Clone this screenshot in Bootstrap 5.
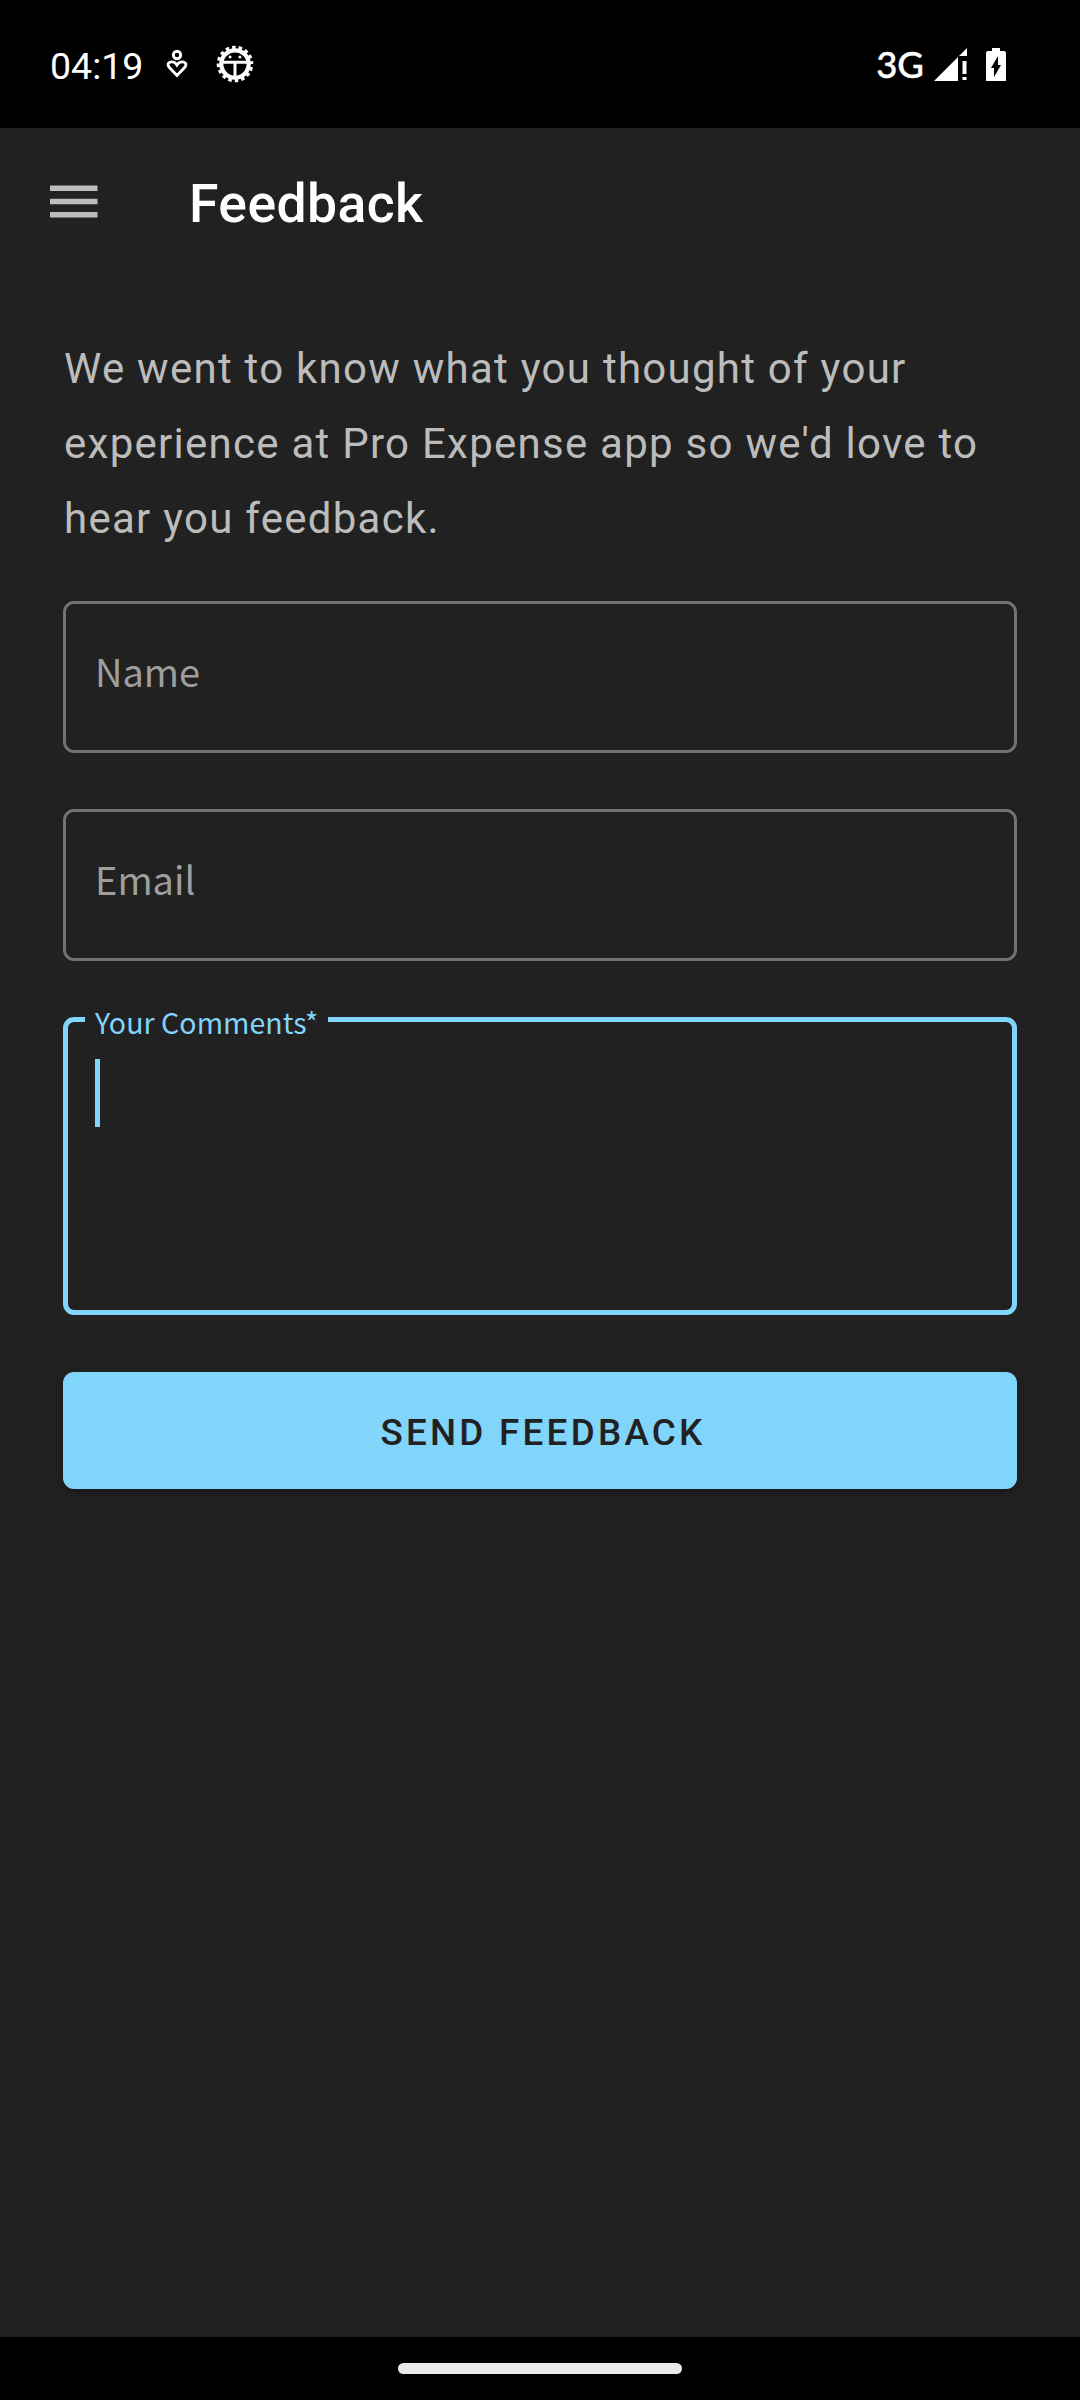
<!DOCTYPE html>
<html lang="en">
<head>
<meta charset="utf-8">
<meta name="viewport" content="width=device-width, initial-scale=1">
<title>Feedback</title>
<link href="https://cdn.jsdelivr.net/npm/bootstrap@5.3.0/dist/css/bootstrap.min.css" rel="stylesheet">
<style>
  html, body { height: 100%; }
  body { background: #212121; font-family: Roboto, sans-serif; overflow: hidden; }
  .status-bar { height: 128px; background: #000; color: #fff; padding: 0 74px 0 50px; }
  .clock { font-size: 37.5px; line-height: 44px; width: 92px; padding-top: 3px; white-space: nowrap; }
  .network { font-family: Lato, sans-serif; font-size: 36.5px; line-height: 44px; font-weight: 500; white-space: nowrap; padding-bottom: 1px; -webkit-text-stroke: .4px #fff; }
  .status-bar svg, .top-bar svg { display: block; flex: none; }
  .top-bar { height: 147px; padding-left: 50px; }
  .page-title { font-size: 53.5px; line-height: 62px; font-weight: 500; color: #fff; letter-spacing: .4px; margin-left: 91px; padding-top: 4px; }
  .content-area { padding: 56px 63px 0; }
  .intro { font-size: 42px; line-height: 75px; letter-spacing: 1.26px; color: #bcbcbc; margin-bottom: 45px; padding-left: 1px; white-space: nowrap; }
  .field { font-family: "Noto Sans CJK JP", "Noto Sans", sans-serif; border-radius: 11px; background: transparent; }
  .field-line, .field-line:focus { height: 152px; border: 3px solid #727272; padding: 0 29px 14px; font-size: 38px; letter-spacing: 0; color: #fff; background: transparent; margin-bottom: 56px; box-shadow: none; }
  .field-line::placeholder { color: #9e9e9e; opacity: 1; }
  .field-comments { height: 298px; border: 5px solid #81d4fa; padding: 37px 27px; margin-bottom: 57px; }
  .float-tag { left: 17px; top: -21px; width: 243px; padding-left: 10px; background: #212121; color: #81d4fa; font-size: 28.5px; line-height: 42px; letter-spacing: .05px; white-space: nowrap; }
  .caret { width: 5px; height: 68px; background: #81d4fa; }
  .btn-send, .btn-send:hover { height: 117px; border: 0; border-radius: 11px; background: #81d4fa; color: #212121; font-size: 36.75px; line-height: 44px; font-weight: 500; letter-spacing: 3.28px; padding: 4px 0 0 6px; box-shadow: 0 4px 8px rgba(0,0,0,.25); }
  .nav-strip { height: 63px; background: #000; }
  .nav-pill { width: 284px; height: 11px; border-radius: 6px; background: #ebebeb; }
</style>
<script src="https://cdn.jsdelivr.net/npm/bootstrap@5.3.0/dist/js/bootstrap.bundle.min.js"></script>
</head>
<body class="d-flex flex-column m-0">
  <header class="status-bar d-flex align-items-center justify-content-between">
    <div class="d-flex align-items-center">
      <span class="clock">04:19</span>
      <svg width="22" height="30" viewBox="0 0 22 30" style="margin-left:24px" fill="none" stroke="#fff" stroke-width="2.9">
        <circle cx="11" cy="6" r="3.7"/>
        <path d="M11 26.4 3.4 18.6C.9 15.8 2.3 12.9 5.8 12.9c2.3 0 4 1.1 5.2 3.1 1.2-2 2.9-3.1 5.2-3.1 3.5 0 4.9 2.9 2.4 5.7Z"/>
      </svg>
      <svg width="38" height="38" viewBox="-19 -19 38 38" style="margin-left:28px" fill="none" stroke="#fff">
        <circle r="13.7" stroke-width="4.2"/>
        <circle r="16.5" stroke-width="3.6" stroke-dasharray="3.5 2.98" stroke-dashoffset="-3.1"/>
        <path d="M-13-1.8H13M0-1.8V13" stroke-width="3"/>
        <path d="M-6.2-7h2.6M3.6-7h2.6" stroke-width="2.6"/>
      </svg>
    </div>
    <div class="d-flex align-items-center">
      <span class="network">3G</span>
      <svg width="33" height="33" viewBox="0 0 33 33" style="margin-left:10px" fill="#fff">
        <path d="M0 33 24 9V33ZM25 8 33 0V8ZM28.5 13H32.5V26H28.5ZM28.5 29H32.5V32H28.5Z"/>
      </svg>
      <svg width="20" height="33" viewBox="0 0 20 33" style="margin-left:19px">
        <path fill="#fff" d="M6 0h8v3h4a2 2 0 0 1 2 2v28H0V5a2 2 0 0 1 2-2h4Z"/>
        <path fill="#000" d="M12 8v9h3L8 29v-9H5Z"/>
      </svg>
    </div>
  </header>
  <nav class="top-bar d-flex align-items-center">
    <svg width="48" height="33" viewBox="0 0 48 33" fill="#bcbcbc"><path d="M0 .5H47.5V6H0ZM0 13.8H47.5V19.2H0ZM0 27H47.5V32.5H0Z"/></svg>
    <h1 class="page-title mb-0">Feedback</h1>
  </nav>
  <main class="content-area flex-grow-1">
    <p class="intro">We went to know what you thought of your<br>experience at Pro Expense app so we'd love to<br>hear you feedback.</p>
    <form>
      <input class="form-control field field-line" type="text" placeholder="Name" aria-label="Name">
      <input class="form-control field field-line" type="email" placeholder="Email" aria-label="Email">
      <div class="field field-comments position-relative">
        <label class="float-tag position-absolute">Your Comments*</label>
        <div class="caret"></div>
      </div>
      <button type="button" class="btn btn-send w-100 text-uppercase">Send Feedback</button>
    </form>
  </main>
  <footer class="nav-strip d-flex align-items-center justify-content-center"><div class="nav-pill"></div></footer>
</body>
</html>
